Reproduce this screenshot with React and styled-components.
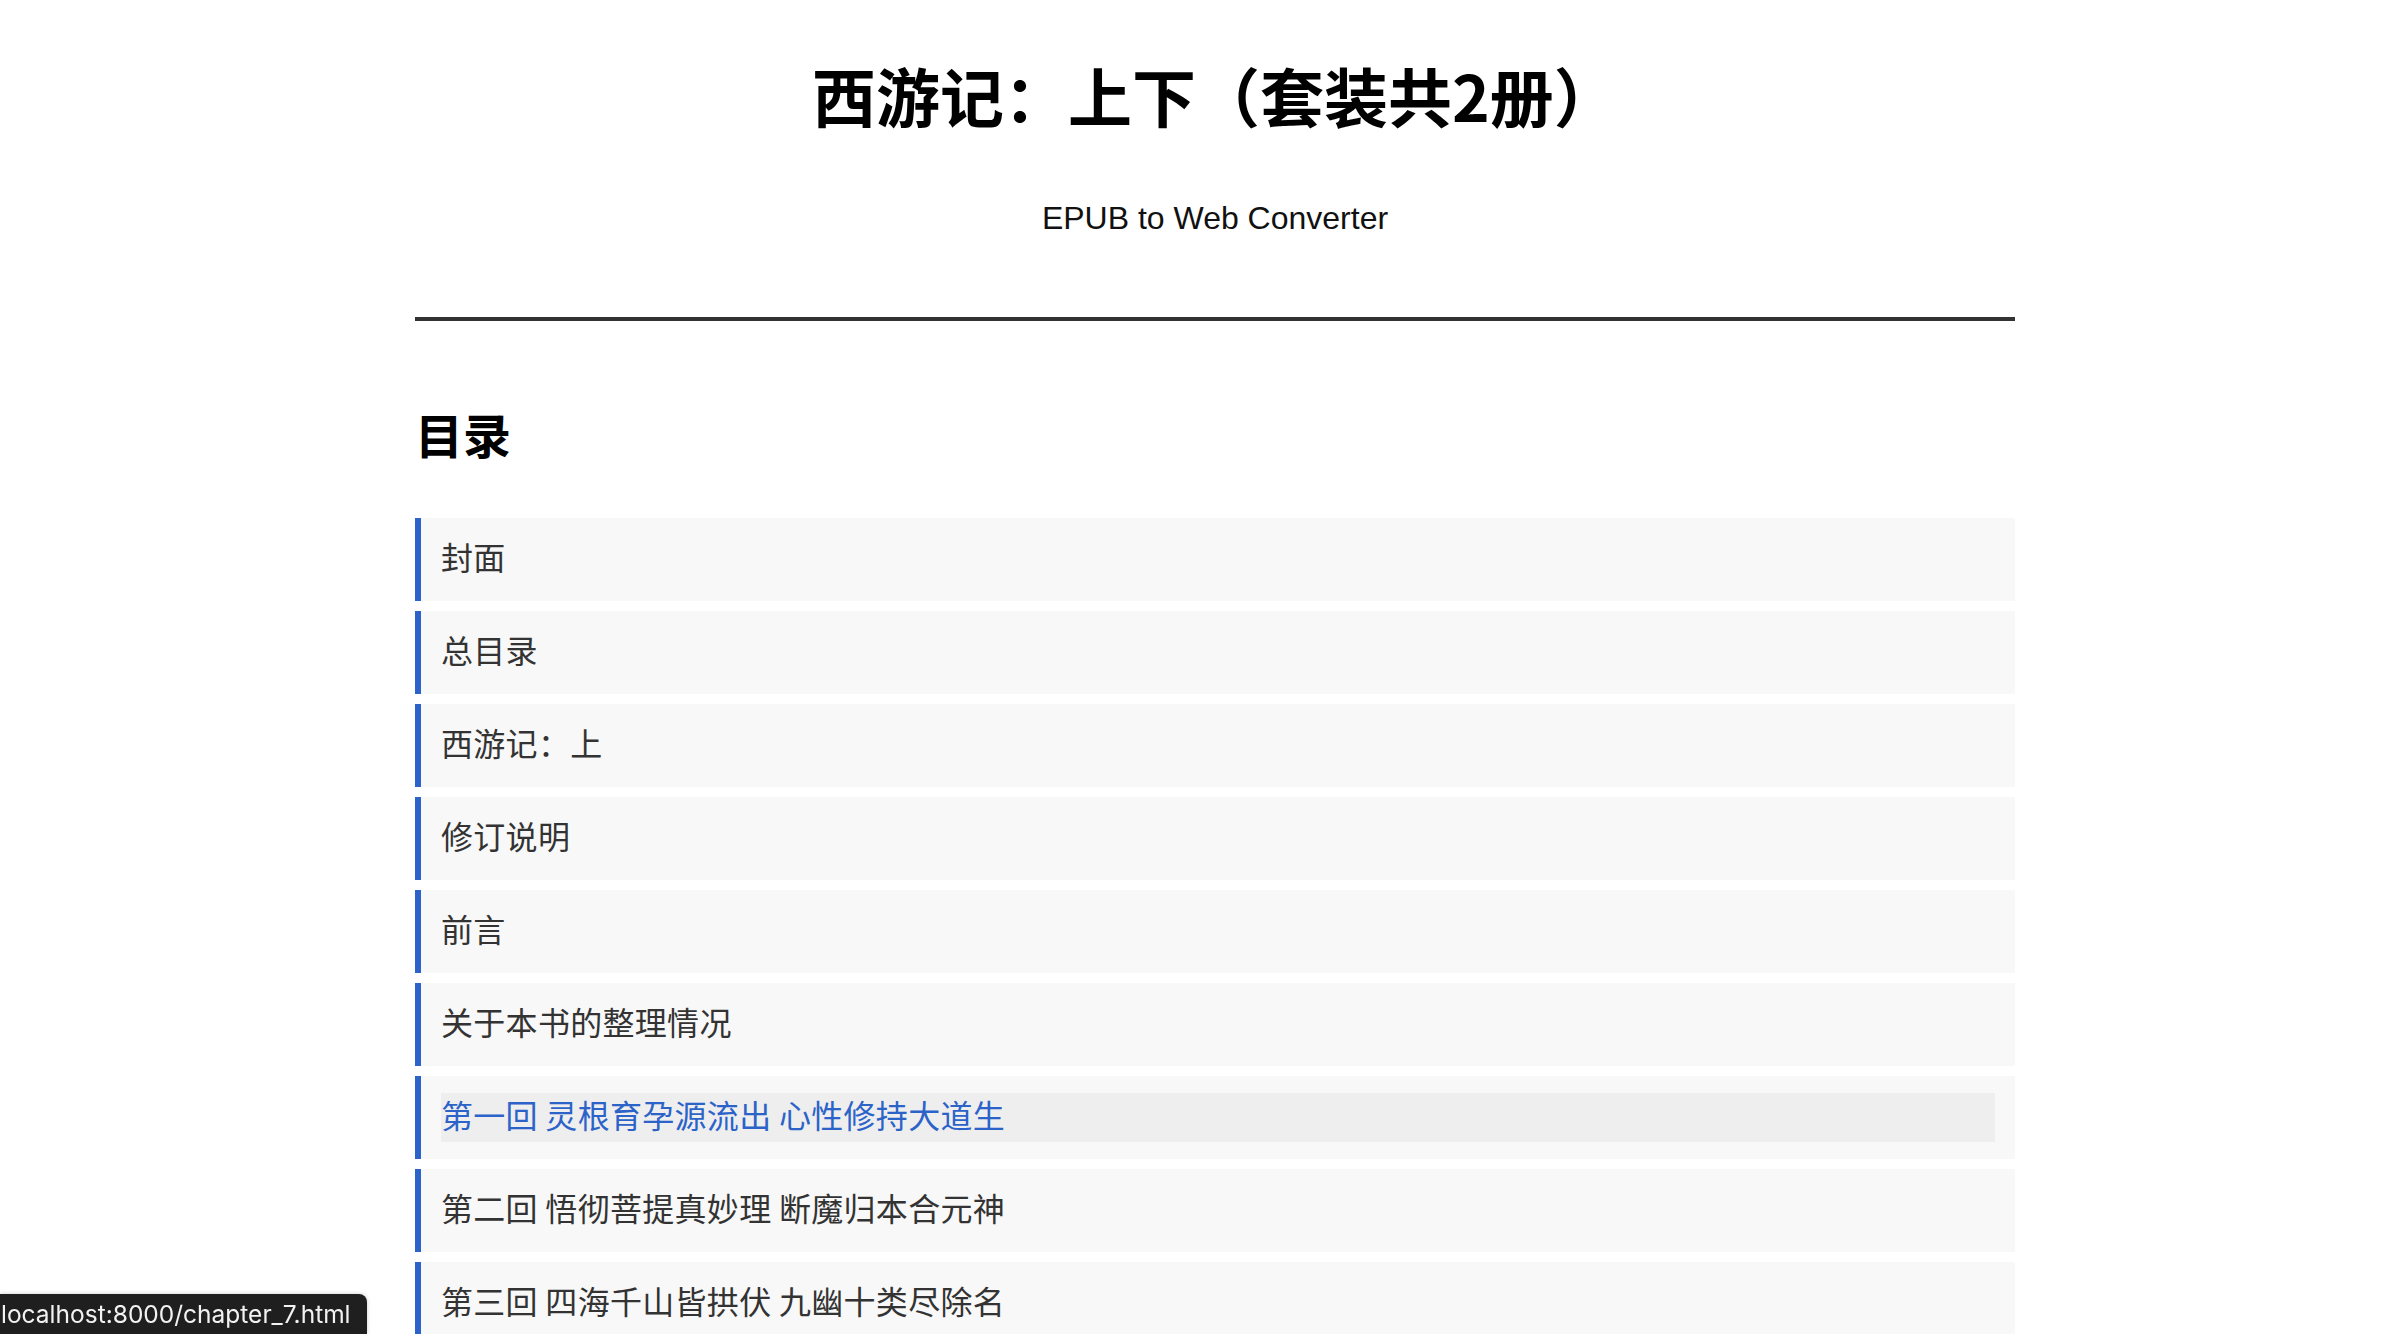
import React from 'react';
import styled, { createGlobalStyle } from 'styled-components';

const chapters = [
    { title: '封面' },
    { title: '总目录' },
    { title: '西游记：上' },
    { title: '修订说明' },
    { title: '前言' },
    { title: '关于本书的整理情况' },
    { title: '第一回 灵根育孕源流出 心性修持大道生', active: true },
    { title: '第二回 悟彻菩提真妙理 断魔归本合元神' },
    { title: '第三回 四海千山皆拱伏 九幽十类尽除名' },
    { title: '第四回 官封弼马心何足 名注齐天意未宁' },
    { title: '第五回 乱蟠桃大圣偷丹 反天宫诸神捉怪' },
];

const App = () => {
    return (
        <Page>
            <GlobalStyle />
            <Container>
                <Header>
                    <Title>西游记：上下（套装共2册）</Title>
                    <Subtitle>EPUB to Web Converter</Subtitle>
                </Header>

                <TocHeading>目录</TocHeading>
                <TocList>
                    {chapters.map((c, i) => (
                        <TocItem key={i}>
                            <TocLink href={`chapter_${i + 1}.html`} $active={c.active}>
                                {c.title}
                            </TocLink>
                        </TocItem>
                    ))}
                </TocList>
            </Container>
            <StatusBar>localhost:8000/chapter_7.html</StatusBar>
        </Page>
    );
};

const GlobalStyle = createGlobalStyle`
    body {
        margin: 0;
        background: #fff;
        color: #333;
        font-family: "Liberation Sans", "Noto Sans CJK SC", sans-serif;
    }
`;

const Page = styled.div`
    padding-left: 34px;
`;

const Container = styled.div`
    max-width: 1600px;
    margin: 0 auto;
`;

const Header = styled.header`
    text-align: center;
    padding-top: 56px;
    padding-bottom: 75px;
    border-bottom: 4px solid #333;
`;

const Title = styled.h1`
    margin: 0;
    font-family: "Noto Sans CJK SC", sans-serif;
    font-size: 64px;
    font-weight: 700;
    line-height: 77px;
    color: #000;
`;

const Subtitle = styled.p`
    margin: 61px 0 0;
    font-size: 32px;
    line-height: 48px;
    color: #111;
`;

const TocHeading = styled.h2`
    margin: 83px 0 56px;
    font-family: "Noto Sans CJK SC", sans-serif;
    font-size: 48px;
    font-weight: 700;
    line-height: 58px;
    color: #000;
`;

const TocList = styled.ul`
    list-style: none;
    margin: 0;
    padding: 0;
    display: flex;
    flex-direction: column;
    gap: 10px;
`;

const TocItem = styled.li`
    background: #f8f8f8;
    border-left: 6px solid #2b63c9;
    padding: 17px 20px;
`;

const TocLink = styled.a`
    display: block;
    font-family: "Noto Sans CJK SC", sans-serif;
    font-size: 32px;
    line-height: 43px;
    padding-bottom: 6px;
    letter-spacing: 0.3px;
    text-decoration: none;
    color: ${p => (p.$active ? '#2b63c9' : '#333')};
    background: ${p => (p.$active ? '#eeeeee' : 'transparent')};
`;

const StatusBar = styled.div`
    position: fixed;
    left: 0;
    bottom: 0;
    height: 40px;
    display: flex;
    align-items: center;
    padding: 0 16px 0 1px;
    background: #1f1f1f;
    color: #f2f2f2;
    font-family: "Inter", "Liberation Sans", sans-serif;
    font-size: 24.5px;
    border-top-right-radius: 8px;
    box-shadow: 0 0 4px rgba(0, 0, 0, 0.2);
`;

export default App;
